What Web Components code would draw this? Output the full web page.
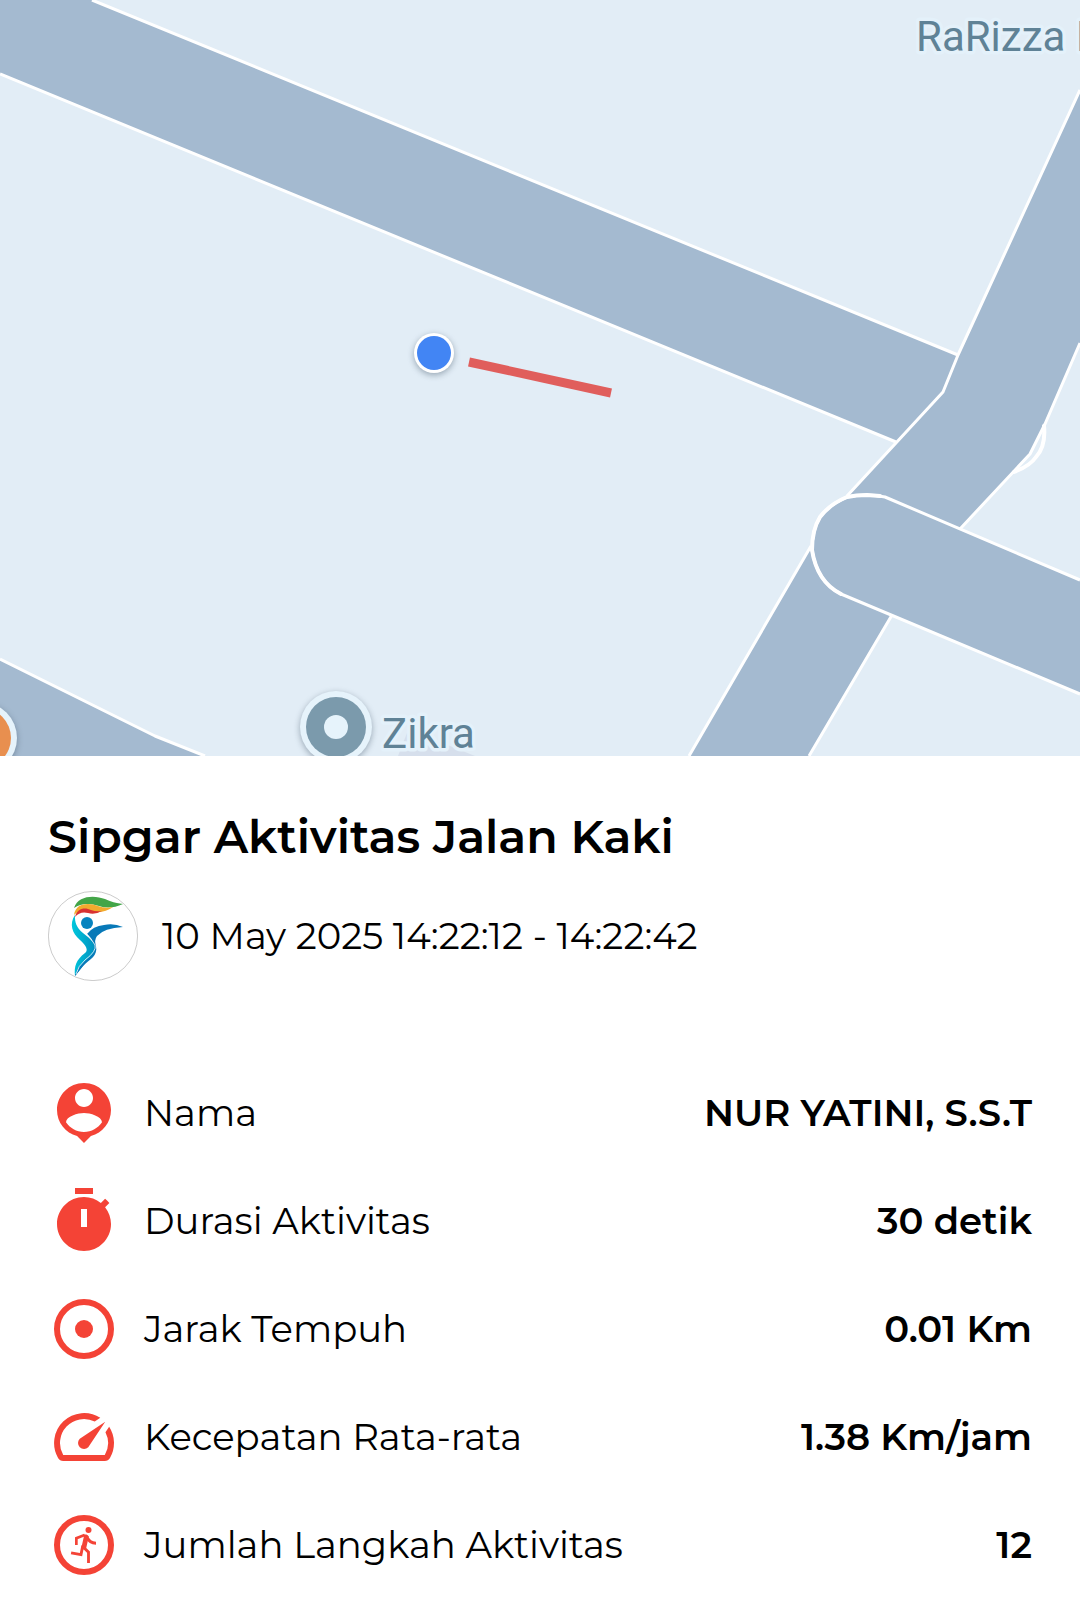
<!DOCTYPE html>
<html lang="id">
<head>
<meta charset="utf-8">
<meta name="viewport" content="width=device-width, initial-scale=1">
<title>Sipgar Aktivitas Jalan Kaki</title>
<style>
  body {
    margin: 0;
    background: #fff;
    color: #000;
    font-family: Montserrat, Inter, sans-serif;
  }
</style>
</head>
<body>
<activity-page>
  <route-map slot="map"></route-map>
  <activity-header slot="header">
    <span slot="title">Sipgar Aktivitas Jalan Kaki</span>
    <span slot="time">10 May 2025 14:22:12 - 14:22:42</span>
  </activity-header>
  <stat-row icon="person">Nama<span slot="value">NUR YATINI, S.S.T</span></stat-row>
  <stat-row icon="timer">Durasi Aktivitas<span slot="value">30 detik</span></stat-row>
  <stat-row icon="target">Jarak Tempuh<span slot="value">0.01 Km</span></stat-row>
  <stat-row icon="speed">Kecepatan Rata-rata<span slot="value">1.38 Km/jam</span></stat-row>
  <stat-row icon="run">Jumlah Langkah Aktivitas<span slot="value">12</span></stat-row>
</activity-page>

<script>
const icons = {
  person: `<path fill-rule="evenodd" d="M12 2c-4.97 0-9 4.03-9 9 0 4.17 2.84 7.67 6.69 8.69L12 22l2.31-2.31C18.16 18.67 21 15.17 21 11c0-4.97-4.03-9-9-9zm0 2c1.66 0 3 1.34 3 3s-1.34 3-3 3-3-1.34-3-3 1.34-3 3-3zm0 14.3c-2.5 0-4.71-1.28-6-3.22C6.03 13.09 10 12 12 12c1.99 0 5.97 1.09 6 3.08-1.29 1.94-3.5 3.22-6 3.22z"/>`,
  timer: `<path d="M15 1H9v2h6V1zm-4 13h2V8h-2v6zm8.03-6.61l1.42-1.42c-.43-.51-.9-.99-1.41-1.41l-1.42 1.42C16.07 4.74 14.12 4 12 4c-4.97 0-9 4.03-9 9s4.02 9 9 9 9-4.03 9-9c0-2.12-.74-4.07-1.97-5.61z" fill-rule="evenodd"/>`,
  target: `<circle cx="12" cy="12" r="9" fill="none" stroke="currentColor" stroke-width="2"/><circle cx="12" cy="12" r="3"/>`,
  speed: `<path d="M20.38 8.57l-1.23 1.85a8 8 0 0 1-.22 7.58H5.07A8 8 0 0 1 15.58 6.85l1.85-1.23A10 10 0 0 0 3.35 19a2 2 0 0 0 1.72 1h13.85a2 2 0 0 0 1.74-1 10 10 0 0 0-.27-10.44zm-9.79 6.84a2 2 0 0 0 2.83 0l5.66-8.49-8.49 5.66a2 2 0 0 0 0 2.83z"/>`,
  run: `<circle cx="12" cy="12" r="9" fill="none" stroke="currentColor" stroke-width="2"/>
    <circle cx="13.5" cy="7" r="1"/>
    <path fill="none" stroke="currentColor" stroke-width=".9" d="M9.45 12V9.75L12.2 8.7"/>
    <path fill="none" stroke="currentColor" stroke-width=".95" d="M12.9 9.2C13.5 10.7 14.5 11.4 16 11.4M7.7 14.6L11 15.2L11.6 12.2M11.9 12.8L13.5 14.4V18"/>
    <path d="M11.9 8.5h.9q.5.1.8.7l-.9 4-1.6-.2.9-4z"/>`
};

class ActivityPage extends HTMLElement {
  constructor(){
    super();
    this.attachShadow({ mode: "open" });
  }

  connectedCallback(){
    this.shadowRoot.innerHTML = `
      <style>
        :host {
          display: block;
        }
        section {
          padding: 54px 48px 24px;
        }
        .stats {
          display: flex;
          flex-direction: column;
          gap: 36px;
          margin-top: 96px;
        }
      </style>
      <main>
        <slot name="map"></slot>
        <section>
          <slot name="header"></slot>
          <div class="stats"><slot></slot></div>
        </section>
      </main>
      `;
  }
}
customElements.define("activity-page", ActivityPage);

class RouteMap extends HTMLElement {
  constructor(){
    super();
    this.attachShadow({ mode: "open" });
  }

  connectedCallback(){
    this.shadowRoot.innerHTML = `
      <style>
        :host {
          display: block;
          background: #e2edf6;
        }
        svg {
          display: block;
          width: 100%;
          height: auto;
        }
        .road {
          fill: #a4bad0;
          stroke: none;
        }
        .edge {
          fill: none;
          stroke: #fff;
          stroke-width: 3;
          stroke-linejoin: round;
        }
        .cap {
          stroke-width: 4;
          stroke-linecap: round;
        }
        .label {
          font-family: Roboto, sans-serif;
          font-size: 42px;
          fill: #5f8296;
          stroke: #e4f1fa;
          stroke-width: 7;
          stroke-linejoin: round;
          paint-order: stroke;
        }
        .shadow {
          filter: drop-shadow(0 2px 3px rgba(60,80,100,0.45));
        }
      </style>
      <svg viewBox="0 0 1080 756" role="img" aria-label="Peta rute">
        <path class="road" d="M0 0H92L958 355L943 392L896 442L0 74Z"/>
        <path class="road" d="M1080 90L958 355L943 392L847 496L810 548L689 756H809L892 615L960 529L1030 454L1045 424L1080 343Z"/>
        <path class="road" d="M1080 580L885 497Q866 493 847 497Q830 504 820 517Q812 530 812 550Q817 582 841 594L1080 694Z"/>
        <path class="road" d="M0 659L155 736L205 756H0Z"/>
        <path class="edge" d="M92 0L958 355M0 74L896 442M1080 90L958 355L943 392L847 496M1080 343L1045 424L1030 454L960 529M811 546L689 756M892 615L809 756"/>
        <path class="edge" d="M1080 580L885 497Q866 493 847 497Q830 504 820 517Q812 530 812 550Q817 582 841 594L1080 694"/>
        <path class="edge" d="M0 659L155 736L205 756"/>
        <path class="edge cap" d="M1044 426Q1046 446 1036 457Q1030 466 1014 472M880 496L867 495Q856 495 847 497Q830 504 820 517Q812 530 812 550Q817 582 841 594"/>
        <path d="M398 756L407 733L440 742L475 756Z" fill="#d6dfec"/>

        <path d="M469 362L611 393" stroke="#e05e5c" stroke-width="9"/>
        <g class="shadow">
          <circle cx="434" cy="353" r="20" fill="#fff"/>
        </g>
        <circle cx="434" cy="353" r="17" fill="#4285f4"/>

        <g class="shadow">
          <circle cx="336" cy="727" r="36" fill="#e6f3fb"/>
          <circle cx="-19" cy="738" r="36" fill="#e6f3fb"/>
        </g>
        <circle cx="336" cy="727" r="30" fill="#7b9aac"/>
        <circle cx="336" cy="727" r="12" fill="#e6f3fb"/>
        <circle cx="-19" cy="738" r="30" fill="#e88f4f"/>

        <text class="label" x="382" y="748">Zikra</text>
        <text class="label" x="916" y="51">RaRizza I</text>
      </svg>
      `;
  }
}
customElements.define("route-map", RouteMap);

class ActivityHeader extends HTMLElement {
  constructor(){
    super();
    this.attachShadow({ mode: "open" });
  }

  connectedCallback(){
    this.shadowRoot.innerHTML = `
      <style>
        :host {
          display: block;
        }
        h1 {
          margin: 0 0 27px;
          font-size: 46px;
          line-height: 54px;
          font-weight: 600;
        }
        .when {
          display: flex;
          align-items: center;
          gap: 24px;
          font-size: 37px;
          line-height: 46px;
          font-weight: 400;
        }
        svg {
          flex: none;
          width: 90px;
          height: 90px;
        }
      </style>
      <h1><slot name="title"></slot></h1>
      <div class="when">
        <svg viewBox="0 0 90 90" aria-hidden="true">
          <defs>
            <linearGradient id="body" x1="0" y1="0" x2="1" y2="0">
              <stop offset="0" stop-color="#00c8dc"/>
              <stop offset="1" stop-color="#0090c0"/>
            </linearGradient>
          </defs>
          <circle cx="45" cy="45" r="44.6" fill="#fff" stroke="#b5b5b5" stroke-width=".7"/>
          <path d="M26 17C30 4 47 4 57 8Q65 12 75 13Q62 19 51 15Q36 10 26 17Z" fill="#43a548"/>
          <path d="M26 24C28 11 42 12 50 15Q57 18 65 16Q57 22 47 21Q34 16 26 24Z" fill="#f2ab2e"/>
          <path d="M27 26C29 17 37 16 43 19Q48 21 54 20Q47 24 40 22Q32 20 27 26Z" fill="#d93232"/>
          <circle cx="39" cy="32" r="6" fill="#0783bf"/>
          <path d="M39 43Q45 35 56 34Q66 32 75 36Q56 37 49 45Q46 49 48 55C50 65 42 68 35 75L27 85C29 70 37 66 43 59Q49 53 39 43Z" fill="#0879b8"/>
          <path d="M27 24C21 33 24 42 32 49Q42 58 37 62C28 69 26 75 27 85Q29 76 37 70C45 64 50 59 45 51C38 42 26 40 27 24Z" fill="url(#body)"/>
          <path d="M45 51Q50 58 43 65L35 75L27 85Q29 76 37 70C45 64 50 59 45 51Z" fill="#0879b8"/>
          <path d="M38 42Q43 47 47 54Q49 60 37 69Q30 75 28 83" fill="none" stroke="#fff" stroke-width=".8"/>
        </svg>
        <slot name="time"></slot>
      </div>
      `;
  }
}
customElements.define("activity-header", ActivityHeader);

class StatRow extends HTMLElement {
  constructor(){
    super();
    this.attachShadow({ mode: "open" });
  }

  connectedCallback(){
    const icon = this.getAttribute("icon");
    this.shadowRoot.innerHTML = `
      <style>
        :host {
          display: flex;
          align-items: center;
          gap: 24px;
          font-size: 37px;
          line-height: 46px;
        }
        svg {
          flex: none;
          width: 72px;
          height: 72px;
          color: #f44336;
          fill: currentColor;
        }
        .name {
          flex: 1;
          font-weight: 400;
        }
        .value {
          font-weight: 600;
          text-align: right;
        }
      </style>
      <svg viewBox="0 0 24 24" aria-hidden="true">${icons[icon]}</svg>
      <span class="name"><slot></slot></span>
      <span class="value"><slot name="value"></slot></span>
      `;
  }
}
customElements.define("stat-row", StatRow);
</script>
</body>
</html>
